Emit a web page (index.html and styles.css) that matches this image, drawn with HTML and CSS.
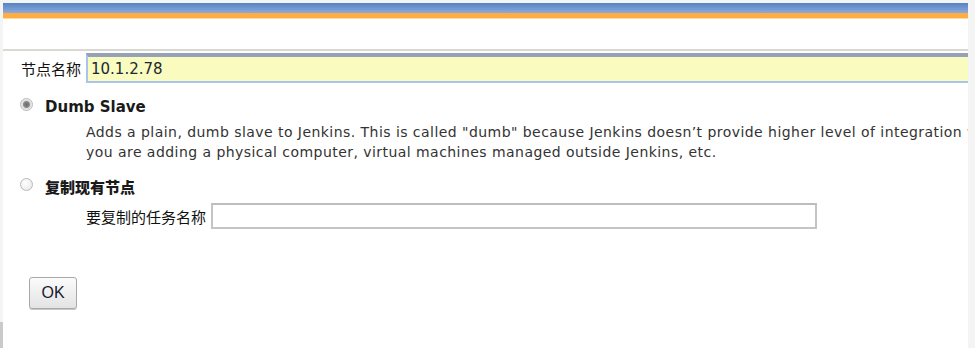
FILE: index.html
```html
<!DOCTYPE html>
<html lang="zh">
<head>
    <meta charset="UTF-8">
    <title>新建节点</title>
    <link rel="stylesheet" href="styles.css">
</head>
<body>
    <div class="page">
        <!-- Top header bands -->
        <div class="band-blue"></div>
        <div class="band-orange"></div>
        <div class="head-space"></div>
        <div class="head-rule"></div>

        <!-- New node form -->
        <form class="node-form">
            <div class="name-row">
                <label class="name-label" for="nodeName">节点名称</label>
                <input class="name-input" id="nodeName" type="text" value="10.1.2.78">
            </div>

            <div class="option">
                <label class="option-title">
                    <input class="radio" type="radio" name="mode" checked>
                    <span class="option-text">Dumb Slave</span>
                </label>
                <div class="option-desc">
                    Adds a plain, dumb slave to Jenkins. This is called "dumb" because Jenkins doesn’t provide higher level of integration with<br>
                    you are adding a physical computer, virtual machines managed outside Jenkins, etc.
                </div>
            </div>

            <div class="option">
                <label class="option-title">
                    <input class="radio" type="radio" name="mode">
                    <span class="option-text cjk-bold">复制现有节点</span>
                </label>
                <div class="copy-row">
                    <span class="copy-label">要复制的任务名称</span>
                    <input class="copy-input" type="text">
                </div>
            </div>

            <div class="submit-row">
                <button class="ok-button" type="button">OK</button>
            </div>
        </form>
    </div>
</body>
</html>
```

FILE: styles.css
```css
/* General Reset */
* {
    margin: 0;
    padding: 0;
    box-sizing: border-box;
}
body {
    background: linear-gradient(#f4f4f4 322px, #cacaca 322px) left top / 3px 100% no-repeat, #f4f4f4;
    font-family: "DejaVu Sans", Verdana, "Noto Sans CJK SC", sans-serif;
    color: #222;
    overflow: hidden;
}
.page {
    margin: 3px 7px 0 3px;
    height: 345px;
    background: #fff;
    overflow: hidden;
}
/* Header bands */
.band-blue {
    height: 10px;
    background: linear-gradient(#5683bf, #8eaadf);
}
.band-orange {
    height: 6px;
    background: #ffad3f;
    border-bottom: 1px solid #ffd8a4;
}
.head-space {
    height: 30px;
}
.head-rule {
    height: 2px;
    background: #d9d9d2;
}
/* Form */
.node-form {
    display: flex;
    flex-direction: column;
}
.name-row {
    display: flex;
    align-items: center;
    gap: 5px;
    margin-top: 2px;
    padding-left: 18px;
}
.name-label {
    font-family: "Noto Sans CJK SC", sans-serif;
    font-size: 15px;
    color: #111;
}
.name-input {
    flex: 1;
    height: 30px;
    margin-right: -12px;
    padding: 0 3px;
    background: #f9fbbf;
    border: 2px solid #a9c4ef;
    border-top: 4px solid #96a2b8;
    font-family: "DejaVu Sans", Verdana, sans-serif;
    font-size: 15px;
    color: #1a2a33;
    outline: none;
}
.option {
    display: flex;
    flex-direction: column;
}
.option-title {
    display: flex;
    align-items: center;
    height: 20px;
    margin-top: 11px;
    padding-left: 17px;
    font-size: 15px;
    font-weight: bold;
    color: #1a1a1a;
}
.option + .option .option-title {
    margin-top: 12px;
}
.option-text {
    padding-top: 5px;
}
.radio {
    appearance: none;
    width: 13px;
    height: 13px;
    margin-right: 12px;
    border: 1px solid #b9b9b9;
    border-radius: 50%;
    background: radial-gradient(circle at 40% 35%, #fff, #e4e4e4);
}
.radio:checked {
    background: radial-gradient(circle, #6a6a6a 0, #8a8a8a 3px, #dcdcdc 4px, #f4f4f4 6px);
}
.cjk-bold {
    font-family: "Noto Sans CJK SC", sans-serif;
    font-weight: 900;
}
.option-desc {
    margin-top: 8px;
    padding-left: 83px;
    font-size: 14px;
    letter-spacing: 0.45px;
    line-height: 20px;
    color: #333;
    white-space: nowrap;
}
.copy-row {
    display: flex;
    align-items: center;
    gap: 5px;
    margin-top: 9px;
    padding-left: 83px;
}
.copy-label {
    font-family: "Noto Sans CJK SC", sans-serif;
    font-size: 15px;
    color: #111;
}
.copy-input {
    width: 606px;
    height: 26px;
    border: 2px solid #c4c4c4;
    border-top-color: #bdbdbd;
    background: #fff;
    outline: none;
}
.submit-row {
    margin-top: 48px;
    padding-left: 26px;
}
.ok-button {
    width: 48px;
    height: 32px;
    font-family: "Liberation Sans", Arial, sans-serif;
    font-size: 16px;
    color: #1a1a2e;
    background: linear-gradient(#fbfbfb, #e3e3e3);
    border: 1px solid #a8a8a8;
    border-radius: 3px;
    box-shadow: 0 1px 0 #c8c8c8;
}
```
